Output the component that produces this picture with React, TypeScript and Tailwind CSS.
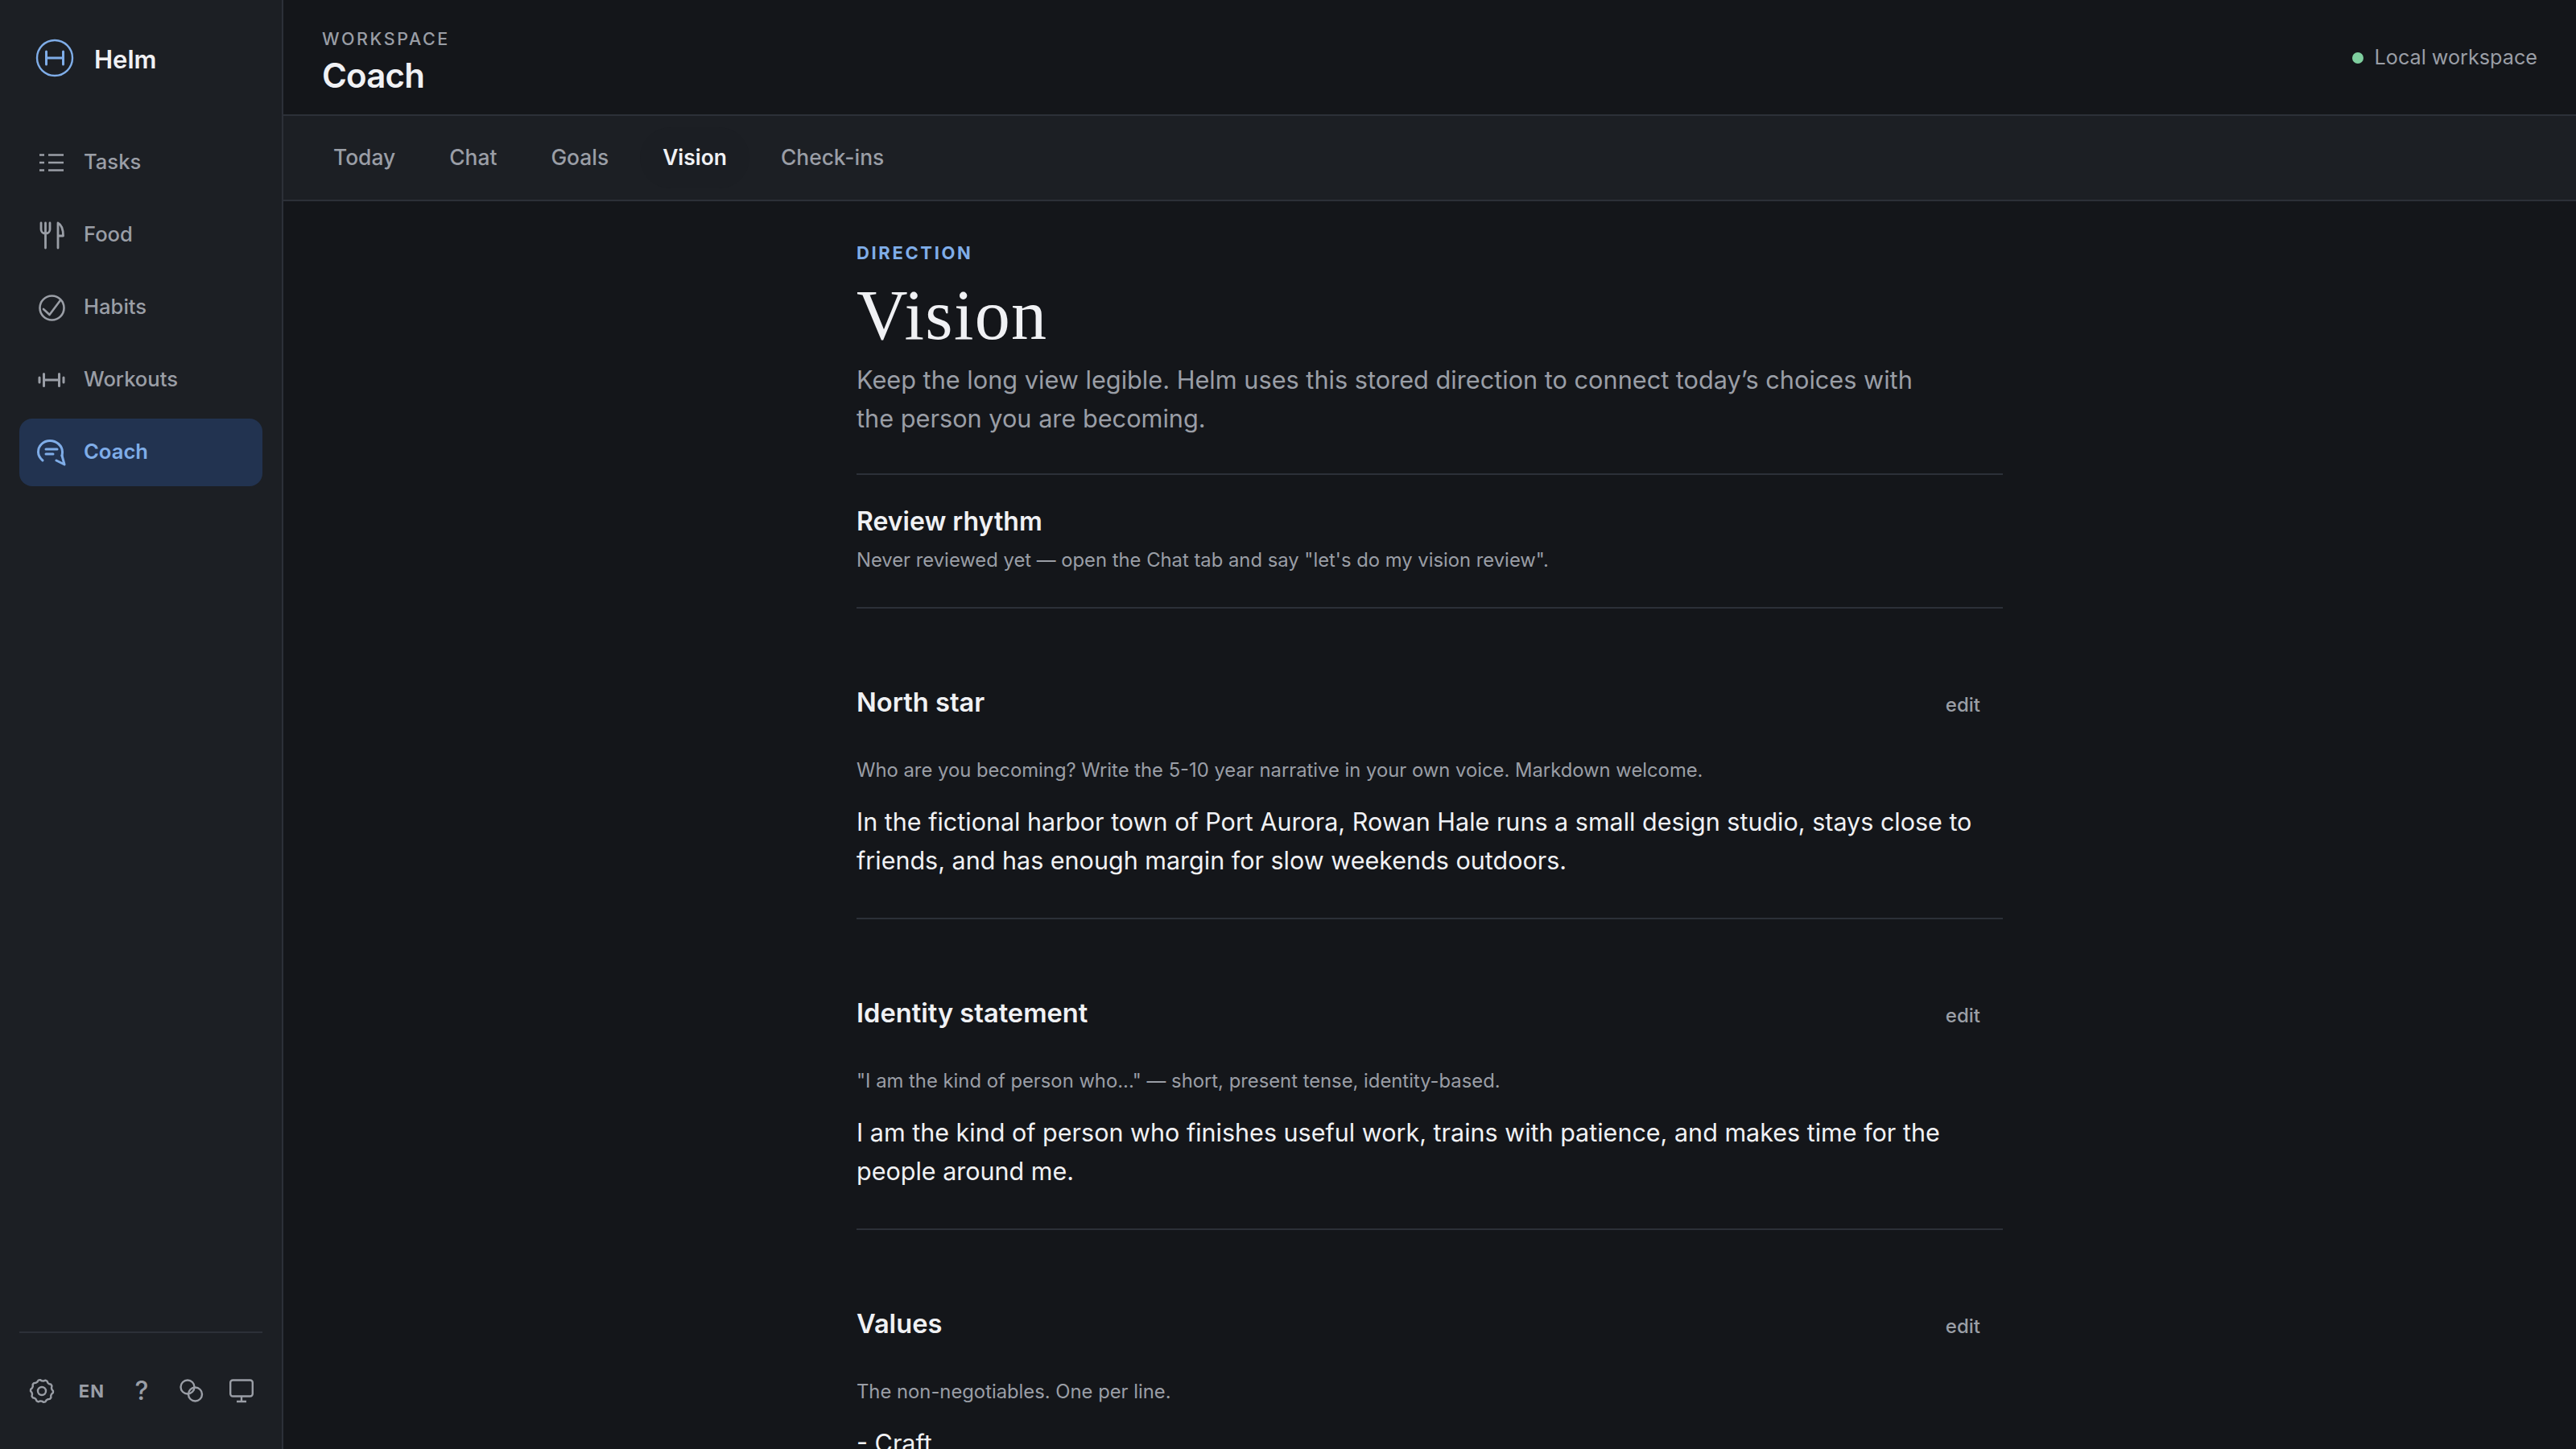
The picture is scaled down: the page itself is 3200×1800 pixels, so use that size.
import type { ReactNode } from "react";

const TasksIcon = () => (
  <svg width="32" height="32" viewBox="0 0 32 32" fill="none" stroke="currentColor" strokeWidth="2.6">
    <path d="M1 6.500h6M12 6.500h19M1 16h6M12 16h19M1 25.500h6M12 25.500h19" />
  </svg>
);

const FoodIcon = () => (
  <svg width="32" height="36" viewBox="0 0 32 36" fill="none" stroke="currentColor" strokeWidth="2.800" strokeLinecap="round" strokeLinejoin="round">
    <path d="M3 3v8a5 5 0 0 0 5 5h1a5 5 0 0 0 5-5V3M8.500 3v31" />
    <path d="M24 34V3c4 2 6.500 8 6.500 16H24" />
  </svg>
);

const HabitsIcon = () => (
  <svg width="33" height="33" viewBox="0 0 33 33" fill="none" stroke="currentColor" strokeWidth="2.600" strokeLinecap="round" strokeLinejoin="round">
    <circle cx="16.500" cy="16.500" r="15" />
    <path d="M6 18l7.500 7L27 7" />
  </svg>
);

const WorkoutsIcon = () => (
  <svg width="34" height="20" viewBox="0 0 34 20" fill="none" stroke="currentColor" strokeWidth="3" strokeLinecap="round">
    <path d="M2 7v6M7.500 2.500v15M26.500 2.500v15M32 7v6" />
    <path d="M7.500 10h19" />
  </svg>
);

const CoachIcon = () => (
  <svg width="36" height="33" viewBox="0 0 36 33" fill="none" stroke="currentColor" strokeWidth="3" strokeLinecap="round" strokeLinejoin="round">
    <path d="M7 26C3.500 23 1.500 19.500 1.500 15.500 1.500 7.500 8 1.500 16 1.500s15.500 6 15.500 14c0 1.500-.2 3-.5 4.500" />
    <path d="M24 26l10 5-3-11" />
    <path d="M11 12h14M11 18h9" />
  </svg>
);

const gearPath = () => {
  const teeth = 10;
  const pts: string[] = [];
  for (let i = 0; i < teeth * 4; i++) {
    const a = (i / (teeth * 4)) * Math.PI * 2;
    const r = i % 4 < 2 ? 14 : 12.6;
    pts.push(`${(16 + r * Math.cos(a)).toFixed(2)} ${(16 + r * Math.sin(a)).toFixed(2)}`);
  }
  return `M${pts.join("L")}Z`;
};

const GearIcon = () => (
  <svg width="32" height="32" viewBox="0 0 32 32" fill="none" stroke="currentColor" strokeWidth="2.400" strokeLinejoin="round">
    <circle cx="16" cy="16" r="5" />
    <path d={gearPath()} />
  </svg>
);

const CirclesIcon = () => (
  <svg width="30" height="30" viewBox="0 0 30 30" fill="none" stroke="currentColor" strokeWidth="2.400">
    <circle cx="10" cy="10" r="8.500" />
    <circle cx="19.500" cy="19" r="8.500" />
  </svg>
);

const MonitorIcon = () => (
  <svg width="32" height="30" viewBox="0 0 32 30" fill="none" stroke="currentColor" strokeWidth="2.400" strokeLinejoin="round">
    <rect x="2.200" y="1.500" width="27.600" height="20" rx="3" />
    <path d="M16 22v6M10 28h12" />
  </svg>
);

const navItems: { label: string; icon: ReactNode; active?: boolean }[] = [
  { label: "Tasks", icon: <TasksIcon /> },
  { label: "Food", icon: <FoodIcon /> },
  { label: "Habits", icon: <HabitsIcon /> },
  { label: "Workouts", icon: <WorkoutsIcon /> },
  { label: "Coach", icon: <CoachIcon />, active: true },
];

const tabs = ["Today", "Chat", "Goals", "Vision", "Check-ins"];

const sections = [
  {
    title: "North star",
    hint: "Who are you becoming? Write the 5-10 year narrative in your own voice. Markdown welcome.",
    body: "In the fictional harbor town of Port Aurora, Rowan Hale runs a small design studio, stays close to friends, and has enough margin for slow weekends outdoors.",
  },
  {
    title: "Identity statement",
    hint: '"I am the kind of person who..." — short, present tense, identity-based.',
    body: "I am the kind of person who finishes useful work, trains with patience, and makes time for the people around me.",
  },
  {
    title: "Values",
    hint: "The non-negotiables. One per line.",
    body: "- Craft",
  },
];

function Sidebar() {
  return (
    <aside className="flex h-full w-[352px] shrink-0 flex-col border-r-2 border-[#2c3038] bg-[#1c1f24] px-6">
      <div className="flex h-[144px] shrink-0 items-center gap-[25px] pl-[20px]">
        <svg width="48" height="48" viewBox="0 0 48 48" fill="none" stroke="#7fade8" strokeWidth="2.400" strokeLinecap="round">
          <circle cx="24" cy="24" r="22" />
          <path d="M13.500 16v16M34.500 16v16M13.500 24h21" strokeWidth="3" />
        </svg>
        <span className="mt-[2px] text-[31px] leading-none font-semibold text-[#f0f1f4]">Helm</span>
      </div>
      <nav className="mt-[16px] flex flex-col gap-[6px]">
        {navItems.map((item) => (
          <div
            key={item.label}
            className={
              item.active
                ? "flex h-[84px] items-center rounded-[16px] bg-[#223350] pl-[22px] text-[#7fade8]"
                : "flex h-[84px] items-center rounded-[16px] pl-[22px] text-[#9a9ea6]"
            }
          >
            <span className="flex w-[36px] items-center justify-center">{item.icon}</span>
            <span className={item.active ? "mb-[2px] ml-[22px] text-[25.6px] font-semibold" : "mb-[2px] ml-[22px] text-[25.6px] font-medium"}>
              {item.label}
            </span>
          </div>
        ))}
      </nav>
      <div className="mt-auto flex h-[146px] shrink-0 items-center gap-[6px] border-t-2 border-[#2c3038] text-[#9a9ea6]">
        <span className="flex w-[56px] shrink-0 justify-center"><GearIcon /></span>
        <span className="flex w-[56px] shrink-0 justify-center text-[22px] font-bold tracking-[0.05em]">EN</span>
        <span className="flex w-[56px] shrink-0 justify-center text-[32px] font-medium">?</span>
        <span className="flex w-[56px] shrink-0 justify-center"><CirclesIcon /></span>
        <span className="flex w-[56px] shrink-0 justify-center"><MonitorIcon /></span>
      </div>
    </aside>
  );
}

function SectionBlock({ title, hint, body }: { title: string; hint: string; body: string }) {
  return (
    <section className="border-b-2 border-[#2c3038] pt-[94px] pb-[47px]">
      <div className="flex items-center justify-between pr-[28px]">
        <h2 className="text-[32.64px] leading-[44px] font-semibold text-[#f0f1f4]">{title}</h2>
        <span className="mt-[8px] text-[24px] font-medium text-[#9a9ea6]">edit</span>
      </div>
      <p className="mt-[45px] text-[23.8px] leading-[36px] text-[#9a9ea6]">{hint}</p>
      <p className="mt-[22px] text-[30.5px] leading-[48px] text-[#f0f1f4]">{body}</p>
    </section>
  );
}

export default function App() {
  return (
    <div className="flex h-[1800px] w-[3200px] overflow-hidden bg-[#14161a] font-['Inter',sans-serif]">
      <Sidebar />
      <main className="flex min-w-0 flex-1 flex-col">
        <header className="flex h-[144px] shrink-0 items-center justify-between border-b-2 border-[#2c3038] px-[48px]">
          <div className="mt-[14px] flex flex-col">
            <span className="text-[21.5px] leading-[32px] font-medium tracking-[0.12em] text-[#9a9ea6]">WORKSPACE</span>
            <span className="text-[42px] leading-[60px] font-semibold tracking-[-0.02em] text-[#f0f1f4]">Coach</span>
          </div>
          <div className="mt-[2px] flex items-center gap-[14px] text-[25.2px] text-[#9a9ea6]">
            <span className="h-[14px] w-[14px] rounded-full bg-[#7fcf9f]" />
            Local workspace
          </div>
        </header>
        <div className="flex h-[106px] shrink-0 items-center gap-[11px] border-b-2 border-[#2c3038] bg-[#1c1f24] pb-[1px] pl-[34px]">
          {tabs.map((tab) => (
            <span
              key={tab}
              className={
                tab === "Vision"
                  ? "flex h-[76px] items-center rounded-full bg-[#1b1e23] px-[28px] text-[26.4px] font-semibold text-[#f0f1f4]"
                  : "flex h-[76px] items-center rounded-full px-[28px] text-[26.4px] font-medium text-[#9a9ea6]"
              }
            >
              {tab}
            </span>
          ))}
        </div>
        <div className="min-h-0 flex-1 overflow-hidden">
          <div className="mx-auto w-[1424px] pt-[48px]">
            <p className="text-[22px] leading-[32px] font-bold tracking-[0.12em] text-[#7fade8]">DIRECTION</p>
            <h1 className="mt-[14px] font-['Liberation_Serif',serif] text-[88px] leading-[96px] tracking-[0.015em] text-[#f0f1f4]">Vision</h1>
            <p className="mt-[8px] w-[1340px] text-[30.7px] leading-[48px] text-[#9a9ea6]">
              Keep the long view legible. Helm uses this stored direction to connect today’s choices with the person you are becoming.
            </p>
            <div className="mt-[44px] border-y-2 border-[#2c3038] pt-[34px] pb-[40px]">
              <h2 className="text-[32px] leading-[48px] font-semibold text-[#f0f1f4]">Review rhythm</h2>
              <p className="mt-[6px] text-[23.8px] leading-[36px] text-[#9a9ea6]">
                Never reviewed yet — open the Chat tab and say "let's do my vision review".
              </p>
            </div>
            {sections.map((section) => (
              <SectionBlock key={section.title} {...section} />
            ))}
          </div>
        </div>
      </main>
    </div>
  );
}
